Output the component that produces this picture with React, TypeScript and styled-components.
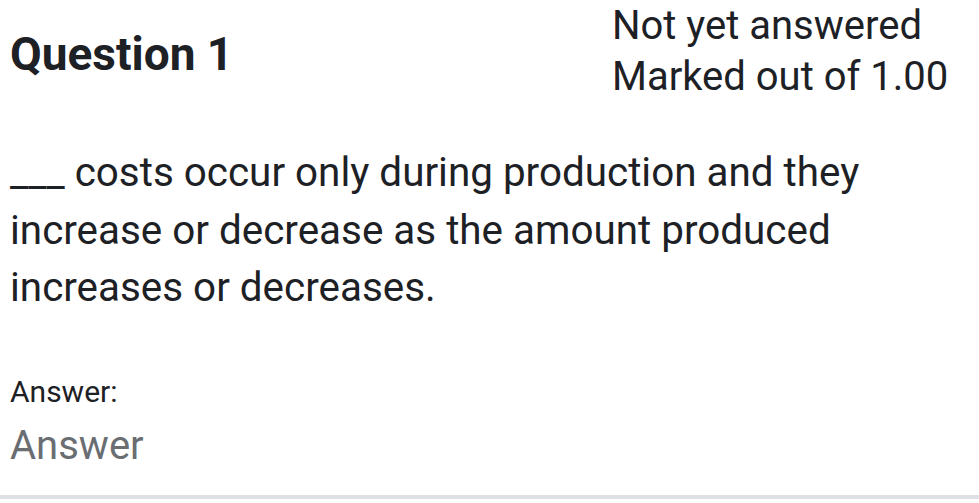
import styled, { createGlobalStyle } from "styled-components";

const GlobalStyle = createGlobalStyle`
  html, body {
    margin: 0;
    padding: 0;
    background: #fff;
  }

  body {
    font-family: Roboto, "Liberation Sans", sans-serif;
    color: #1d2125;
  }
`;

const Page = styled.div`
  width: 979px;
  height: 503px;
  overflow: hidden;
  display: flex;
  flex-direction: column;
`;

const Header = styled.header`
  display: grid;
  grid-template-columns: 602px 1fr;
  align-items: center;
  padding-left: 10px;
  height: 96px;
`;

const QuestionTitle = styled.h3`
  margin: 0;
  padding-top: 6px;
  font-size: 46px;
  font-weight: 700;
`;

const Status = styled.div`
  font-size: 40px;
  line-height: 51px;
`;

const QuestionText = styled.p`
  margin: 48px 0 0;
  padding: 0 10px;
  font-size: 40.4px;
  line-height: 57.5px;
`;

const AnswerBlock = styled.div`
  padding: 0 10px;
  margin-top: 57px;
  flex: 1;
`;

const AnswerLabel = styled.label`
  display: block;
  font-size: 30px;
  line-height: 36px;
`;

const AnswerInput = styled.input`
  display: block;
  border: 0;
  outline: 0;
  padding: 0;
  margin-top: 12px;
  width: 100%;
  height: 48px;
  font-family: Roboto, "Liberation Sans", sans-serif;
  font-size: 40px;
  line-height: 48px;
  color: #1d2125;
  background: transparent;

  &::placeholder {
    color: #6a6e73;
  }
`;

const BottomBar = styled.div`
  height: 4px;
  margin-bottom: 4px;
  background: #dfe1e5;
`;

export default function App() {
  return (
    <Page>
      <GlobalStyle />
      <Header>
        <QuestionTitle>Question 1</QuestionTitle>
        <Status>
          <div>Not yet answered</div>
          <div>Marked out of 1.00</div>
        </Status>
      </Header>
      <QuestionText>
        ___ costs occur only during production and they
        <br />
        increase or decrease as the amount produced
        <br />
        increases or decreases.
      </QuestionText>
      <AnswerBlock>
        <AnswerLabel htmlFor="answer">Answer:</AnswerLabel>
        <AnswerInput id="answer" placeholder="Answer" />
      </AnswerBlock>
      <BottomBar />
    </Page>
  );
}
